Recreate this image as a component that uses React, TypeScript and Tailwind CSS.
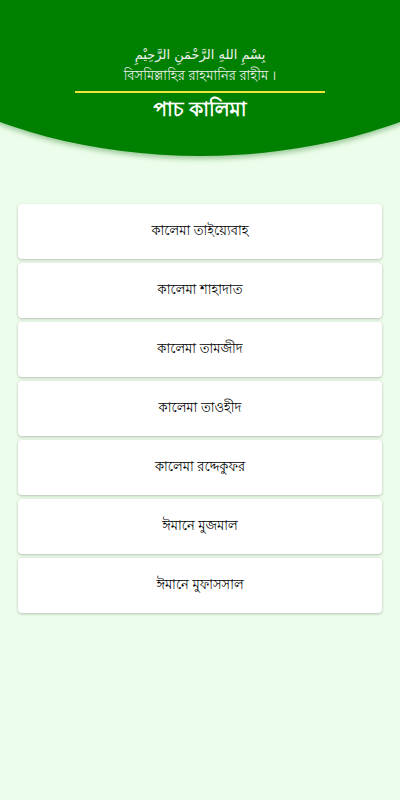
import React from "react";

const items = [
  "কালেমা তাইয়্যেবাহ",
  "কালেমা শাহাদাত",
  "কালেমা তামজীদ",
  "কালেমা তাওহীদ",
  "কালেমা রদ্দেকুফর",
  "ঈমানে মুজমাল",
  "ঈমানে মুফাসসাল",
];

const bn = {
  fontFamily:
    '"Lohit Bengali", "Mukti", "Kalpurush", "SolaimanLipi", "Noto Sans Bengali", "Noto Sans", sans-serif',
};

export default function App() {
  return (
    <div className="w-full min-h-screen overflow-hidden bg-[#edfdeb]">
      <div className="w-[800px] -ml-[200px] -mt-[144px] h-[300px] pt-[144px] bg-[#008000] rounded-b-[400px_254px] shadow-[0_3px_5px_rgba(0,110,0,0.35)] flex flex-col items-center">
        <div
          className="mt-[46px] text-[13px] leading-[18px] text-[#f0f0f0]"
          style={{ fontFamily: '"DejaVu Sans", "Noto Sans", sans-serif' }}
          dir="rtl"
        >
          بِسْمِ اللهِ الرَّحْمَنِ الرَّحِيْمِ
        </div>
        <div className="mt-[2px] text-[13px] leading-[20px] font-light text-[#f0f0f0]" style={bn}>
          বিসমিল্লাহির রাহমানির রাহীম ।
        </div>
        <div className="mt-[5px] w-[250px] h-[2px] bg-[#f2e33a]" />
        <div className="mt-[3px] text-[20px] leading-[28px] font-bold text-white" style={bn}>
          পাচ কালিমা
        </div>
      </div>
      <div className="mt-[48px] px-[18px] flex flex-col gap-[4px]">
        {items.map((t) => (
          <div
            key={t}
            className="h-[55px] bg-white rounded-[4px] shadow-[0_1px_3px_rgba(0,0,0,0.25)] flex items-center justify-center text-[13px] font-light text-black"
            style={bn}
          >
            {t}
          </div>
        ))}
      </div>
    </div>
  );
}
